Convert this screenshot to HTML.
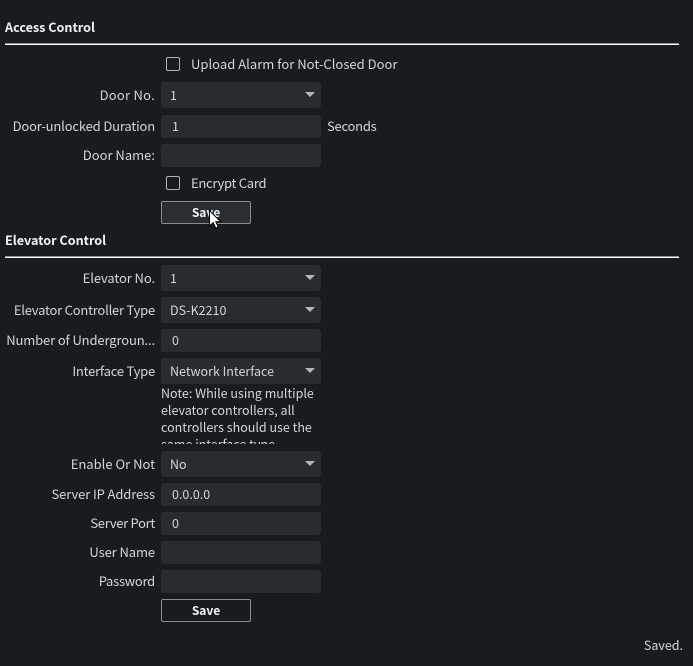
<!DOCTYPE html>
<html>
<head>
<meta charset="utf-8">
<style>
html,body{margin:0;padding:0;}
body{width:693px;height:666px;background:#191c1f;overflow:hidden;position:relative;font-family:"Noto Sans CJK SC","Liberation Sans",sans-serif;font-size:13px;color:#d2d6da;}
.t{position:absolute;left:5px;font-size:12.6px;font-weight:700;color:#f2f3f4;line-height:18px;white-space:nowrap;}
.hr{position:absolute;left:5px;width:674px;height:1px;background:#fff;border-top:1px solid #8e9092;}
.l{position:absolute;right:538px;line-height:18px;white-space:nowrap;text-align:right;}
.b{position:absolute;left:161px;width:160px;background:#282b2f;border-radius:3px;line-height:18px;font-size:12.5px;}
.s{height:26px;}
.s span{position:absolute;left:9px;top:4px;white-space:nowrap;}
.s i{position:absolute;left:144px;top:10px;width:0;height:0;border-left:5px solid transparent;border-right:5px solid transparent;border-top:5px solid #b4b7ba;}
.i{height:23px;}
.i span{position:absolute;left:11px;top:2px;white-space:nowrap;}
.c{position:absolute;left:166px;width:12px;height:12px;border:1px solid #b0b3b6;border-radius:2px;}
.ct{position:absolute;left:191px;line-height:18px;white-space:nowrap;}
.btn{position:absolute;left:161px;width:88px;height:21px;border:1px solid #8a8d90;border-radius:2px;text-align:center;line-height:22px;font-weight:700;color:#f5f5f5;font-size:12px;}
.note{position:absolute;left:161px;top:388px;width:160px;height:56px;overflow:hidden;font-size:12.5px;}
.note div{position:relative;top:-4px;line-height:17px;color:#d2d6da;}
</style>
</head>
<body>
<div class="t" style="top:18px">Access Control</div>
<div class="hr" style="top:43px"></div>

<div class="c" style="top:57px"></div>
<div class="ct" style="top:55px;letter-spacing:.02px">Upload Alarm for Not-Closed Door</div>

<div class="l" style="top:86px;letter-spacing:.25px">Door No.</div>
<div class="b s" style="top:82px"><span>1</span><i></i></div>

<div class="l" style="top:117px;letter-spacing:-.16px">Door-unlocked Duration</div>
<div class="b i" style="top:115px"><span>1</span></div>
<div class="ct" style="left:327px;top:117px;letter-spacing:-.25px">Seconds</div>

<div class="l" style="top:146px">Door Name:</div>
<div class="b i" style="top:144px"></div>

<div class="c" style="top:176px"></div>
<div class="ct" style="top:174px;letter-spacing:-.28px">Encrypt Card</div>

<div class="btn" style="top:201px;background:#2a2d31">Save</div>
<svg style="position:absolute;left:207px;top:209px" width="16" height="21" viewBox="0 0 16 21"><path d="M2.5 1.5V17L6.2 13.6L8.8 19.2L11.3 18L8.8 12.7H13.5Z" fill="#fff" stroke="#000" stroke-width="1"/></svg>

<div class="t" style="top:231px">Elevator Control</div>
<div class="hr" style="top:256px"></div>

<div class="l" style="top:269px;letter-spacing:-.1px">Elevator No.</div>
<div class="b s" style="top:265px"><span>1</span><i></i></div>

<div class="l" style="top:301px;letter-spacing:-.22px">Elevator Controller Type</div>
<div class="b s" style="top:297px"><span>DS-K2210</span><i></i></div>

<div class="l" style="top:331px;letter-spacing:-.13px">Number of Undergroun...</div>
<div class="b i" style="top:329px"><span>0</span></div>

<div class="l" style="top:362px;letter-spacing:-.22px">Interface Type</div>
<div class="b s" style="top:358px"><span>Network Interface</span><i></i></div>

<div class="note"><div>Note: While using multiple elevator controllers, all controllers should use the same interface type.</div></div>

<div class="l" style="top:455px">Enable Or Not</div>
<div class="b s" style="top:451px"><span>No</span><i></i></div>

<div class="l" style="top:485px;letter-spacing:-.12px">Server IP Address</div>
<div class="b i" style="top:483px"><span>0.0.0.0</span></div>

<div class="l" style="top:514px;letter-spacing:-.3px">Server Port</div>
<div class="b i" style="top:512px"><span>0</span></div>

<div class="l" style="top:543px;letter-spacing:-.1px">User Name</div>
<div class="b i" style="top:541px"></div>

<div class="l" style="top:572px;letter-spacing:-.25px">Password</div>
<div class="b i" style="top:570px"></div>

<div class="btn" style="top:599px">Save</div>

<div class="l" style="top:636px;right:10px;font-size:12.5px">Saved.</div>
</body>
</html>
